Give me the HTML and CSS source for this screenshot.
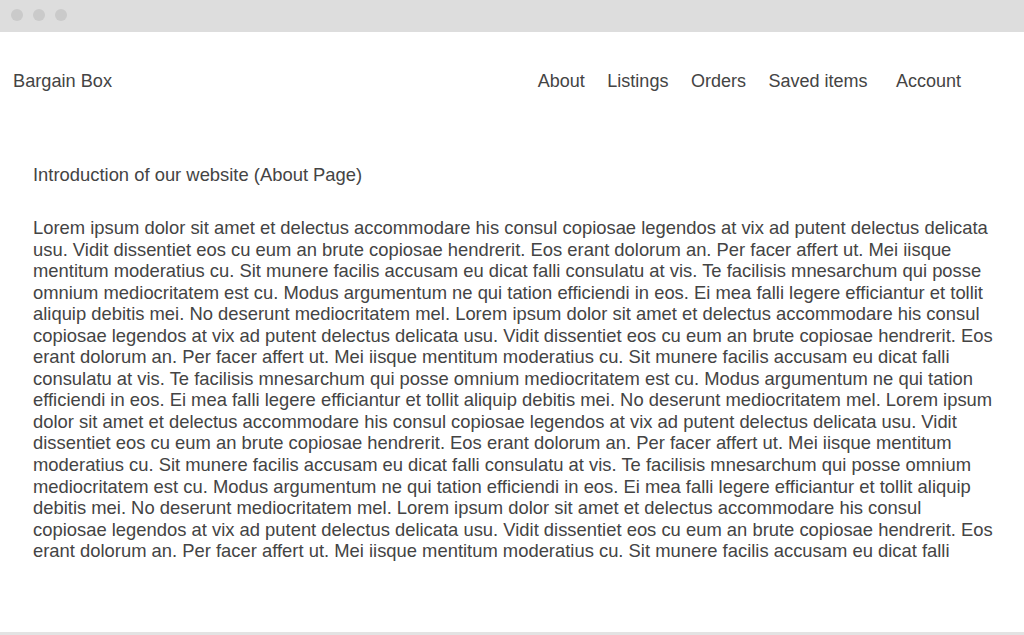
FILE: index.html
```html
<!DOCTYPE html>
<html>
<head>
<meta charset="utf-8">
<link rel="stylesheet" href="styles.css">
</head>
<body>
<div class="window">
  <div class="titlebar">
    <span class="dot"></span><span class="dot"></span><span class="dot"></span>
  </div>
  <div class="page">
    <header class="header">
      <div class="brand">Bargain Box</div>
      <nav class="nav">
        <a>About</a>
        <a>Listings</a>
        <a>Orders</a>
        <a>Saved items</a>
        <a class="account">Account</a>
      </nav>
    </header>
    <main class="content">
      <h1 class="title">Introduction of our website (About Page)</h1>
      <p class="text">Lorem ipsum dolor sit amet et delectus accommodare his consul copiosae legendos at vix ad putent delectus delicata usu. Vidit dissentiet eos cu eum an brute copiosae hendrerit. Eos erant dolorum an. Per facer affert ut. Mei iisque mentitum moderatius cu. Sit munere facilis accusam eu dicat falli consulatu at vis. Te facilisis mnesarchum qui posse omnium mediocritatem est cu. Modus argumentum ne qui tation efficiendi in eos. Ei mea falli legere efficiantur et tollit aliquip debitis mei. No deserunt mediocritatem mel. Lorem ipsum dolor sit amet et delectus accommodare his consul copiosae legendos at vix ad putent delectus delicata usu. Vidit dissentiet eos cu eum an brute copiosae hendrerit. Eos erant dolorum an. Per facer affert ut. Mei iisque mentitum moderatius cu. Sit munere facilis accusam eu dicat falli consulatu at vis. Te facilisis mnesarchum qui posse omnium mediocritatem est cu. Modus argumentum ne qui tation efficiendi in eos. Ei mea falli legere efficiantur et tollit aliquip debitis mei. No deserunt mediocritatem mel. Lorem ipsum dolor sit amet et delectus accommodare his consul copiosae legendos at vix ad putent delectus delicata usu. Vidit dissentiet eos cu eum an brute copiosae hendrerit. Eos erant dolorum an. Per facer affert ut. Mei iisque mentitum moderatius cu. Sit munere facilis accusam eu dicat falli consulatu at vis. Te facilisis mnesarchum qui posse omnium mediocritatem est cu. Modus argumentum ne qui tation efficiendi in eos. Ei mea falli legere efficiantur et tollit aliquip debitis mei. No deserunt mediocritatem mel. Lorem ipsum dolor sit amet et delectus accommodare his consul copiosae legendos at vix ad putent delectus delicata usu. Vidit dissentiet eos cu eum an brute copiosae hendrerit. Eos erant dolorum an. Per facer affert ut. Mei iisque mentitum moderatius cu. Sit munere facilis accusam eu dicat falli</p>
    </main>
  </div>
</div>
</body>
</html>
```

FILE: styles.css
```css
html, body {
  margin: 0;
  padding: 0;
  background: #ffffff;
}
body {
  font-family: "Liberation Sans", Arial, sans-serif;
  color: #444444;
}
.window {
  width: 1024px;
  height: 635px;
  box-sizing: border-box;
  border-bottom: 3px solid #e3e3e3;
  display: flex;
  flex-direction: column;
  overflow: hidden;
}
.titlebar {
  height: 32px;
  flex: none;
  background: #dddddd;
  display: flex;
  align-items: center;
  gap: 10px;
  padding-left: 11px;
  padding-bottom: 2px;
  box-sizing: border-box;
}
.dot {
  width: 12px;
  height: 12px;
  border-radius: 50%;
  background: #cacaca;
}
.page {
  flex: 1;
  overflow: hidden;
}
.header {
  display: flex;
  justify-content: space-between;
  align-items: center;
  padding: 39px 63px 0 13px;
  font-size: 18px;
  line-height: 21px;
}
.brand {
  font-size: 18.2px;
}
.nav {
  display: flex;
  gap: 22.5px;
}
.nav a {
  color: #444444;
}
.nav .account {
  margin-left: 6px;
}
.content {
  padding: 0 27px 0 33px;
}
.title {
  font-size: 18.4px;
  font-weight: normal;
  line-height: 21px;
  margin: 72px 0 0 0;
}
.text {
  font-size: 18.4px;
  line-height: 21.55px;
  margin: 32px 0 0 0;
}
```
